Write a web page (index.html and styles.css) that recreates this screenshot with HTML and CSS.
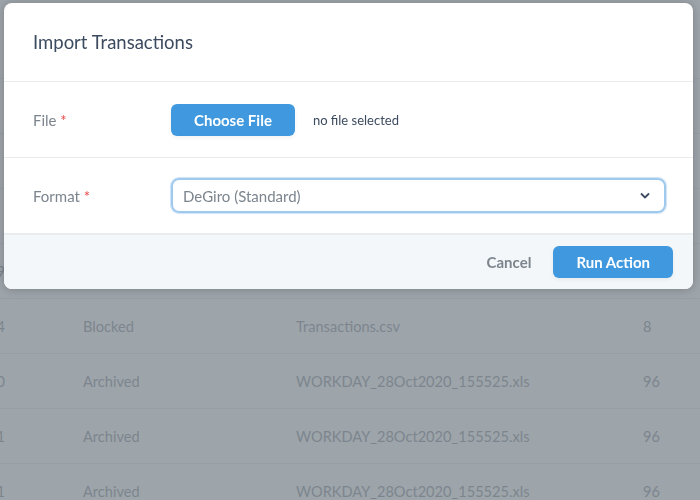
FILE: index.html
```html
<!DOCTYPE html>
<html lang="en">
<head>
    <meta charset="UTF-8">
    <meta name="viewport" content="width=device-width, initial-scale=1.0">
    <title>Import Transactions</title>
    <link rel="stylesheet" href="styles.css">
</head>
<body>
    <div class="table">
        <div class="row head"><span></span><span>Status</span><span>File</span><span>Rows</span></div>
        <div class="row"><span></span><span>Archived</span><span>WORKDAY_28Oct2020_155525.xls</span><span>96</span></div>
        <div class="row"><span></span><span>Archived</span><span>WORKDAY_28Oct2020_155525.xls</span><span>96</span></div>
        <div class="row"><span></span><span>Archived</span><span>WORKDAY_28Oct2020_155525.xls</span><span>96</span></div>
        <div class="row"><span>29</span><span>Archived</span><span>Transactions.csv</span><span>8</span></div>
        <div class="row"><span>24</span><span>Blocked</span><span>Transactions.csv</span><span>8</span></div>
        <div class="row"><span>20</span><span>Archived</span><span>WORKDAY_28Oct2020_155525.xls</span><span>96</span></div>
        <div class="row"><span>21</span><span>Archived</span><span>WORKDAY_28Oct2020_155525.xls</span><span>96</span></div>
        <div class="row"><span>11</span><span>Archived</span><span>WORKDAY_28Oct2020_155525.xls</span><span>96</span></div>
    </div>

    <div class="overlay">
        <div class="modal">
            <div class="modal-header">Import Transactions</div>

            <div class="field">
                <label class="field-label">File <span class="req">*</span></label>
                <div class="field-input">
                    <button type="button" class="btn btn-primary">Choose File</button>
                    <span class="file-name">no file selected</span>
                </div>
            </div>

            <div class="field">
                <label class="field-label">Format <span class="req">*</span></label>
                <div class="field-input">
                    <div class="select">
                        <span>DeGiro (Standard)</span>
                        <svg width="10" height="7" viewBox="0 0 10 7"><path d="M1 1.5l4 4 4-4" fill="none" stroke="#3c4b5f" stroke-width="1.8"/></svg>
                    </div>
                </div>
            </div>

            <div class="modal-footer">
                <button type="button" class="btn-link">Cancel</button>
                <button type="button" class="btn btn-primary">Run Action</button>
            </div>
        </div>
    </div>
</body>
</html>
```

FILE: styles.css
```css
body {
    margin: 0;
    font-family: Lato, "Noto Sans", sans-serif;
    background-color: #fff;
    color: #7c858e;
    overflow: hidden;
}
.table {
    margin: 24px 0 0 -20px;
}
.row {
    display: grid;
    grid-template-columns: 103px 213px 347px 1fr;
    height: 54px;
    align-items: center;
    border-bottom: 1px solid #e3e7eb;
    font-size: 14.6px;
}
.row span:first-child {
    text-align: right;
    padding-right: 78px;
}
.overlay {
    position: fixed;
    top: 0;
    left: 0;
    right: 0;
    bottom: 0;
    background-color: rgba(124, 133, 142, 0.75);
}
.modal {
    width: 689px;
    margin: 3px 0 0 4px;
    background-color: #fff;
    border-radius: 8px;
    overflow: hidden;
    box-shadow: 0 2px 10px rgba(0, 0, 0, 0.15), 0 -2px 8px rgba(0, 0, 0, 0.08);
}
.modal-header {
    height: 78px;
    line-height: 78px;
    padding-left: 29px;
    font-size: 18.5px;
    color: #3c4b5f;
    border-bottom: 1px solid #e9edf0;
}
.field {
    display: flex;
    align-items: center;
    height: 75px;
    border-bottom: 1px solid #e9edf0;
}
.field:last-of-type {
    height: 77px;
    border-bottom: none;
}
.field-label {
    width: 138px;
    padding-left: 29px;
    font-size: 15px;
    color: #7c858e;
}
.req {
    color: #e74444;
}
.field-input {
    display: flex;
    align-items: center;
}
.btn {
    border: none;
    cursor: pointer;
    font-family: inherit;
}
.btn-primary {
    height: 32px;
    padding: 0 23px;
    background-color: #4099de;
    color: #fff;
    font-size: 15px;
    font-weight: bold;
    border-radius: 6px;
    box-shadow: 0 2px 4px rgba(0, 0, 0, 0.05);
}
.file-name {
    margin-left: 18px;
    font-size: 13px;
    color: #3c4b5f;
}
.select {
    box-sizing: border-box;
    width: 495px;
    height: 35px;
    padding: 0 14px 0 10px;
    display: flex;
    align-items: center;
    justify-content: space-between;
    border: 2px solid #9fcaed;
    border-radius: 8px;
    box-shadow: 0 0 1px 1px #cfe3f5;
    font-size: 15px;
    color: #7c858e;
}
.modal-footer {
    display: flex;
    justify-content: flex-end;
    align-items: center;
    height: 54px;
    padding-right: 20px;
    background-color: #f4f7fa;
    border-top: 1px solid #e9edf0;
}
.btn-link {
    margin-right: 22px;
    background: none;
    border: none;
    padding: 0;
    font-family: inherit;
    font-size: 15px;
    font-weight: bold;
    color: #7c858e;
    cursor: pointer;
}
```
